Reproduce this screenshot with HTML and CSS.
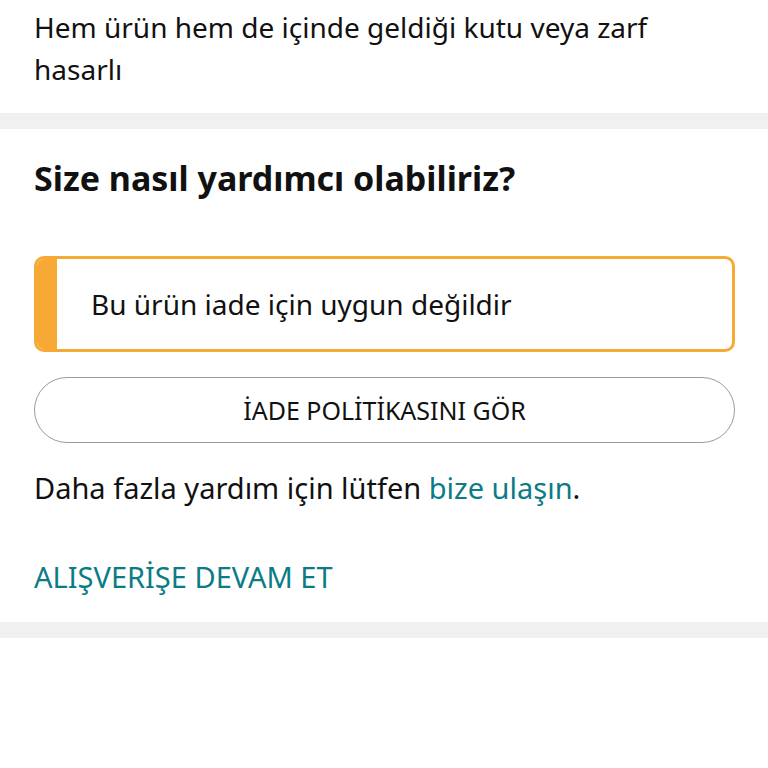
FILE: index.html
```html
<!DOCTYPE html>
<html lang="tr">
<head>
<meta charset="utf-8">
<link rel="stylesheet" href="styles.css">
</head>
<body>
<section class="panel top">
  <p class="reason">Hem ürün hem de içinde geldiği kutu veya zarf hasarlı</p>
</section>
<div class="band"></div>
<section class="panel help">
  <h2 class="title">Size nasıl yardımcı olabiliriz?</h2>
  <div class="alert">
    <div class="alert-bar"></div>
    <div class="alert-text">Bu ürün iade için uygun değildir</div>
  </div>
  <button class="policy">İADE POLİTİKASINI GÖR</button>
  <p class="contact">Daha fazla yardım için lütfen <a class="link" href="#">bize ulaşın</a>.</p>
  <a class="continue" href="#">ALIŞVERİŞE DEVAM ET</a>
</section>
<div class="band"></div>
</body>
</html>
```
FILE: styles.css
```css
html, body {
  margin: 0;
  padding: 0;
  background: #ffffff;
}
body {
  font-family: "Noto Sans", "Open Sans", sans-serif;
  color: #111111;
  width: 768px;
}
.panel {
  padding: 0 33px 0 34px;
}
.top {
  padding-top: 6px;
  padding-bottom: 23px;
}
.reason {
  margin: 0;
  font-size: 28px;
  line-height: 42px;
  max-width: 660px;
}
.band {
  height: 16px;
  background: #f0f0f0;
}
.help {
  padding-top: 28px;
  padding-bottom: 27px;
  display: flex;
  flex-direction: column;
}
.title {
  margin: 0;
  font-size: 34px;
  line-height: 42px;
  font-weight: 700;
}
.alert {
  margin-top: 57px;
  height: 96px;
  box-sizing: border-box;
  border: 3px solid #f7a935;
  border-radius: 10px;
  display: flex;
  overflow: hidden;
}
.alert-bar {
  width: 20px;
  background: #f7a935;
  flex: none;
}
.alert-text {
  padding-left: 34px;
  display: flex;
  align-items: center;
  font-size: 28px;
}
.policy {
  margin-top: 25px;
  height: 66px;
  border: 1px solid #9a9a9a;
  border-radius: 33px;
  background: #ffffff;
  font-family: inherit;
  font-size: 25px;
  color: #111111;
  padding: 0;
}
.contact {
  margin: 27px 0 0;
  font-size: 29px;
  line-height: 36px;
}
.link {
  color: #0b7c86;
  text-decoration: none;
}
.continue {
  margin-top: 53px;
  font-size: 29px;
  line-height: 36px;
  color: #0b7c86;
  text-decoration: none;
  align-self: flex-start;
}
```
